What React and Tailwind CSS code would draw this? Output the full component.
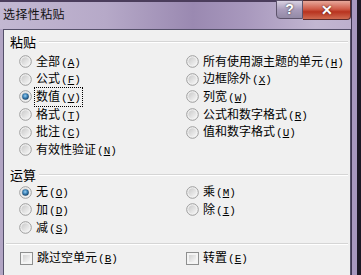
import React from 'react';

function Radio({ checked }) {
    return (
        <svg width="13" height="13" viewBox="0 0 13 13" className="shrink-0">
            <defs>
                <linearGradient id="rOuter" x1="0" y1="0" x2="1" y2="1">
                    <stop offset="0" stopColor="#c9c9c9" />
                    <stop offset="1" stopColor="#f7f7f7" />
                </linearGradient>
                <radialGradient id="rDot" cx="0.45" cy="0.4" r="0.6">
                    <stop offset="0" stopColor="#9fd0f0" />
                    <stop offset="0.5" stopColor="#3f86bc" />
                    <stop offset="1" stopColor="#163f62" />
                </radialGradient>
            </defs>
            <circle cx="6.5" cy="6.5" r="5.8" fill="#f3f3f3" stroke="#9c9c9c" strokeWidth="1" />
            <circle cx="6.5" cy="6.5" r="4.2" fill="url(#rOuter)" />
            {checked && <circle cx="6.5" cy="6.5" r="3.3" fill="url(#rDot)" />}
        </svg>
    );
}

function Check() {
    return (
        <span className="w-[13px] h-[13px] shrink-0 border border-[#8e8f8f] bg-[#f4f4f4] p-[2px] flex">
            <span className="flex-1 bg-[linear-gradient(135deg,#d2d2d2,#f8f8f8)]" />
        </span>
    );
}

function Key({ k }) {
    return (
        <span className="font-['Liberation_Mono',monospace] text-[11px] ml-[1px]">
            (<span className="underline underline-offset-1">{k}</span>)
        </span>
    );
}

function Option({ label, k, checked, focus, box }) {
    return (
        <div className="h-[17.6px] flex items-center">
            {box ? <Check /> : <Radio checked={checked} />}
            <span className={'ml-[4px] text-[12px] leading-[14px] whitespace-nowrap' + (focus ? ' outline-1 outline-dotted outline-black outline-offset-1' : '')}>
                {label}<Key k={k} />
            </span>
        </div>
    );
}

function Header({ text }) {
    return (
        <div className="h-[18px] flex items-center pl-[6px] pr-[2px]">
            <span className="text-[13px] leading-[16px]">{text}</span>
            <span className="flex-1 ml-[3px] h-[2px] border-t border-[#d5d5d5] border-b border-b-white" />
        </div>
    );
}

export default function App() {
    return (
        <div className="w-[361px] h-[275px] overflow-hidden flex text-black font-['Noto_Sans_CJK_SC','Noto_Sans',sans-serif]">
            <div className="w-[351px] flex flex-col bg-[#b9adc9]">
                {/* title bar */}
                <div className="h-[29px] flex items-start border-t-2 border-[#4b3d5c] bg-[linear-gradient(90deg,#c3b8d2_0%,#b6a9c8_30%,#9a89b1_55%,#a898bd_70%,#c2b6d1_90%,#bdb0cd_100%)]">
                    <span className="pl-[3px] pt-[5px] text-[12px] leading-[14px] tracking-[0.4px] text-[#111]">选择性粘贴</span>
                    <div className="ml-auto flex -mt-[2px]">
                        <div className="w-[27px] h-[19px] rounded-bl-[4px] border border-[#5d536b] bg-[linear-gradient(180deg,#d9d2e2,#a99cbb_50%,#938aa6)] flex items-center justify-center text-white text-[14px] font-bold font-['Liberation_Sans',sans-serif] [text-shadow:0_0_2px_#222]">?</div>
                        <div className="w-[48px] h-[20px] rounded-br-[4px] border border-l-0 border-[#5b2b2b] bg-[linear-gradient(180deg,#e7a89b,#cf5b48_45%,#b8331f_60%,#cf6a50)] flex items-center justify-center text-white text-[14px] font-bold font-['Liberation_Sans',sans-serif] [text-shadow:0_0_2px_#411]">✕</div>
                    </div>
                </div>
                {/* body */}
                <div className="flex-1 flex">
                    <div className="w-[3px] bg-[#b2a5c4]" />
                    <div className="w-[348px] bg-[#f0f0f0] border-l border-t border-r border-[#55506a] flex flex-col">
                        <div className="mt-[3px]"><Header text="粘贴" /></div>
                        <div className="mt-[2px] pl-[15px] grid grid-cols-[167px_1fr]">
                            <div className="flex flex-col">
                                <Option label="全部" k="A" />
                                <Option label="公式" k="F" />
                                <Option label="数值" k="V" checked focus />
                                <Option label="格式" k="T" />
                                <Option label="批注" k="C" />
                                <Option label="有效性验证" k="N" />
                            </div>
                            <div className="flex flex-col">
                                <Option label="所有使用源主题的单元" k="H" />
                                <Option label="边框除外" k="X" />
                                <Option label="列宽" k="W" />
                                <Option label="公式和数字格式" k="R" />
                                <Option label="值和数字格式" k="U" />
                            </div>
                        </div>
                        <div className="mt-[7px]"><Header text="运算" /></div>
                        <div className="pl-[15px] grid grid-cols-[167px_1fr]">
                            <div className="flex flex-col">
                                <Option label="无" k="O" checked />
                                <Option label="加" k="D" />
                                <Option label="减" k="S" />
                            </div>
                            <div className="flex flex-col">
                                <Option label="乘" k="M" />
                                <Option label="除" k="I" />
                            </div>
                        </div>
                        <div className="mt-[7px] mx-[2px] h-[2px] border-t border-[#d5d5d5] border-b border-b-white" />
                        <div className="mt-[4px] pl-[16px] grid grid-cols-[166px_1fr]">
                            <Option label="跳过空单元" k="B" box />
                            <Option label="转置" k="E" box />
                        </div>
                    </div>
                </div>
            </div>
            <div className="w-[6px] bg-[#a898c0] border-l border-[#3d3450]" />
            <div className="w-[4px] bg-[#1c1826]" />
        </div>
    );
}
